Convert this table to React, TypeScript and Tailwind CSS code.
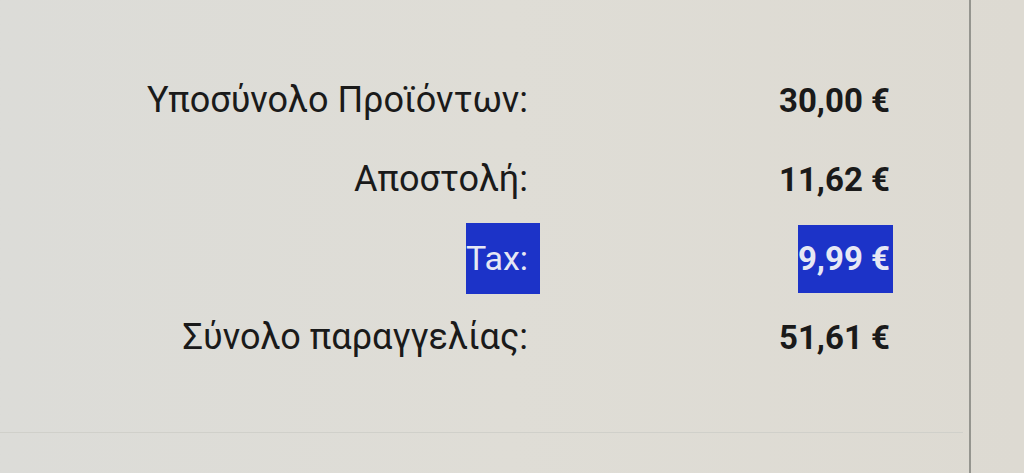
import React from "react";

const rows = [
  { label: "Υποσύνολο Προϊόντων:", value: "30,00 €" },
  { label: "Αποστολή:", value: "11,62 €" },
  { label: "Tax:", value: "9,99 €", selected: true },
  { label: "Σύνολο παραγγελίας:", value: "51,61 €" },
];

export default function App() {
  return (
    <div
      className="h-[473px] w-[1024px] overflow-hidden bg-gradient-to-r from-[#dcdcd8] via-[#dfddd6] to-[#dddad2] text-[#1a1a1a]"
      style={{ fontFamily: "Roboto, 'Noto Sans', sans-serif" }}
    >
      <div className="flex h-full">
        <div className="flex h-full w-[971px] flex-col border-r-2 border-[#95958f]">
          <div className="flex flex-col pt-[61px]">
            {rows.map((row) => (
              <div key={row.label} className="flex h-[79px] items-center">
                <div className="w-[528px] text-right text-[36px] leading-[71px]">
                  {row.selected ? (
                    <span className="-mr-[12px] inline-block bg-[#1c33c8] pr-[12px] text-[34px] text-[#e6e8f4]">
                      {row.label}
                    </span>
                  ) : (
                    <span>{row.label}</span>
                  )}
                </div>
                <div className="w-[362px] text-right text-[33px] font-bold leading-[68px]">
                  {row.selected ? (
                    <span className="-mr-[3px] inline-block bg-[#1c33c8] pr-[3px] text-[#e6e8f4]">
                      {row.value}
                    </span>
                  ) : (
                    <span>{row.value}</span>
                  )}
                </div>
              </div>
            ))}
          </div>
          <div className="mt-[55px] mr-[6px] border-b border-[#d0d0ca]" />
        </div>
        <div className="h-full flex-1" />
      </div>
    </div>
  );
}
